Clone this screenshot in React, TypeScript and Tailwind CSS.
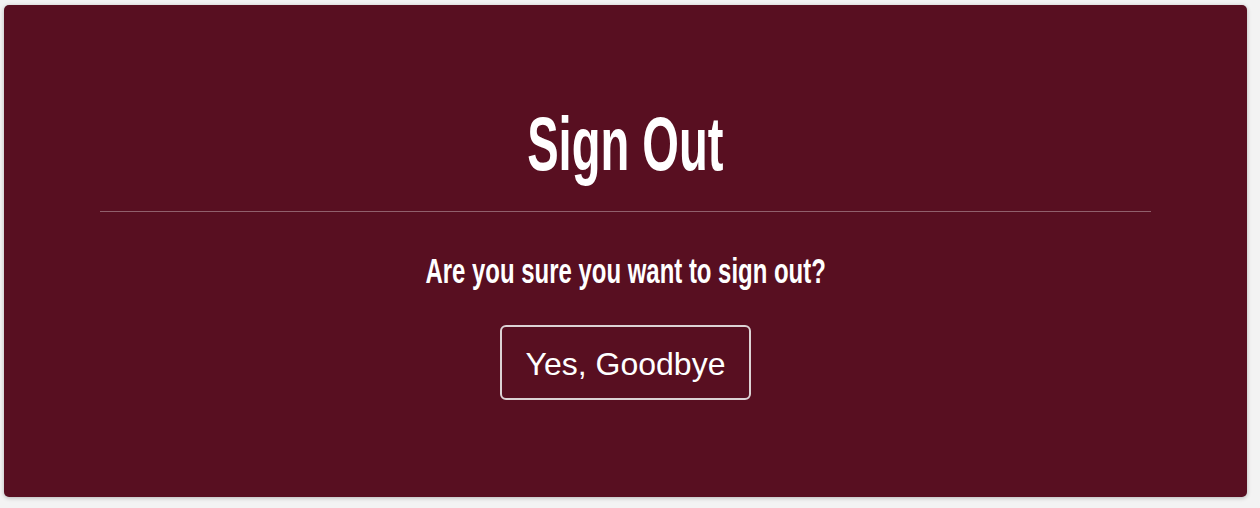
import React from "react";

export default function App() {
  return (
    <div className="w-[1260px] h-[508px] bg-[#f3f3f3] pt-[5px] pl-[4px]" style={{ fontFamily: '"Liberation Sans", Arial, sans-serif' }}>
      <div className="w-[1243px] h-[492px] bg-[#580f21] rounded-[5px] shadow-[0_1px_4px_rgba(0,0,0,0.25)] px-[96px] flex flex-col items-center">
        <div className="mt-[101px] h-[76px] flex items-center justify-center">
          <h1 className="text-[76px] leading-none font-bold text-white scale-x-[0.62] whitespace-nowrap">Sign Out</h1>
        </div>
        <div className="mt-[29px] w-full h-px bg-[#90606c]" />
        <div className="mt-[41px] h-[35px] flex items-center justify-center">
          <p className="text-[35px] leading-none font-bold text-white scale-x-[0.684] whitespace-nowrap">Are you sure you want to sign out?</p>
        </div>
        <button className="mt-[37px] w-[251px] h-[75px] border-2 border-[#dcd3d5] rounded-[6px] flex items-center justify-center text-white text-[32px] leading-none pt-[2px]">
          Yes, Goodbye
        </button>
      </div>
    </div>
  );
}
